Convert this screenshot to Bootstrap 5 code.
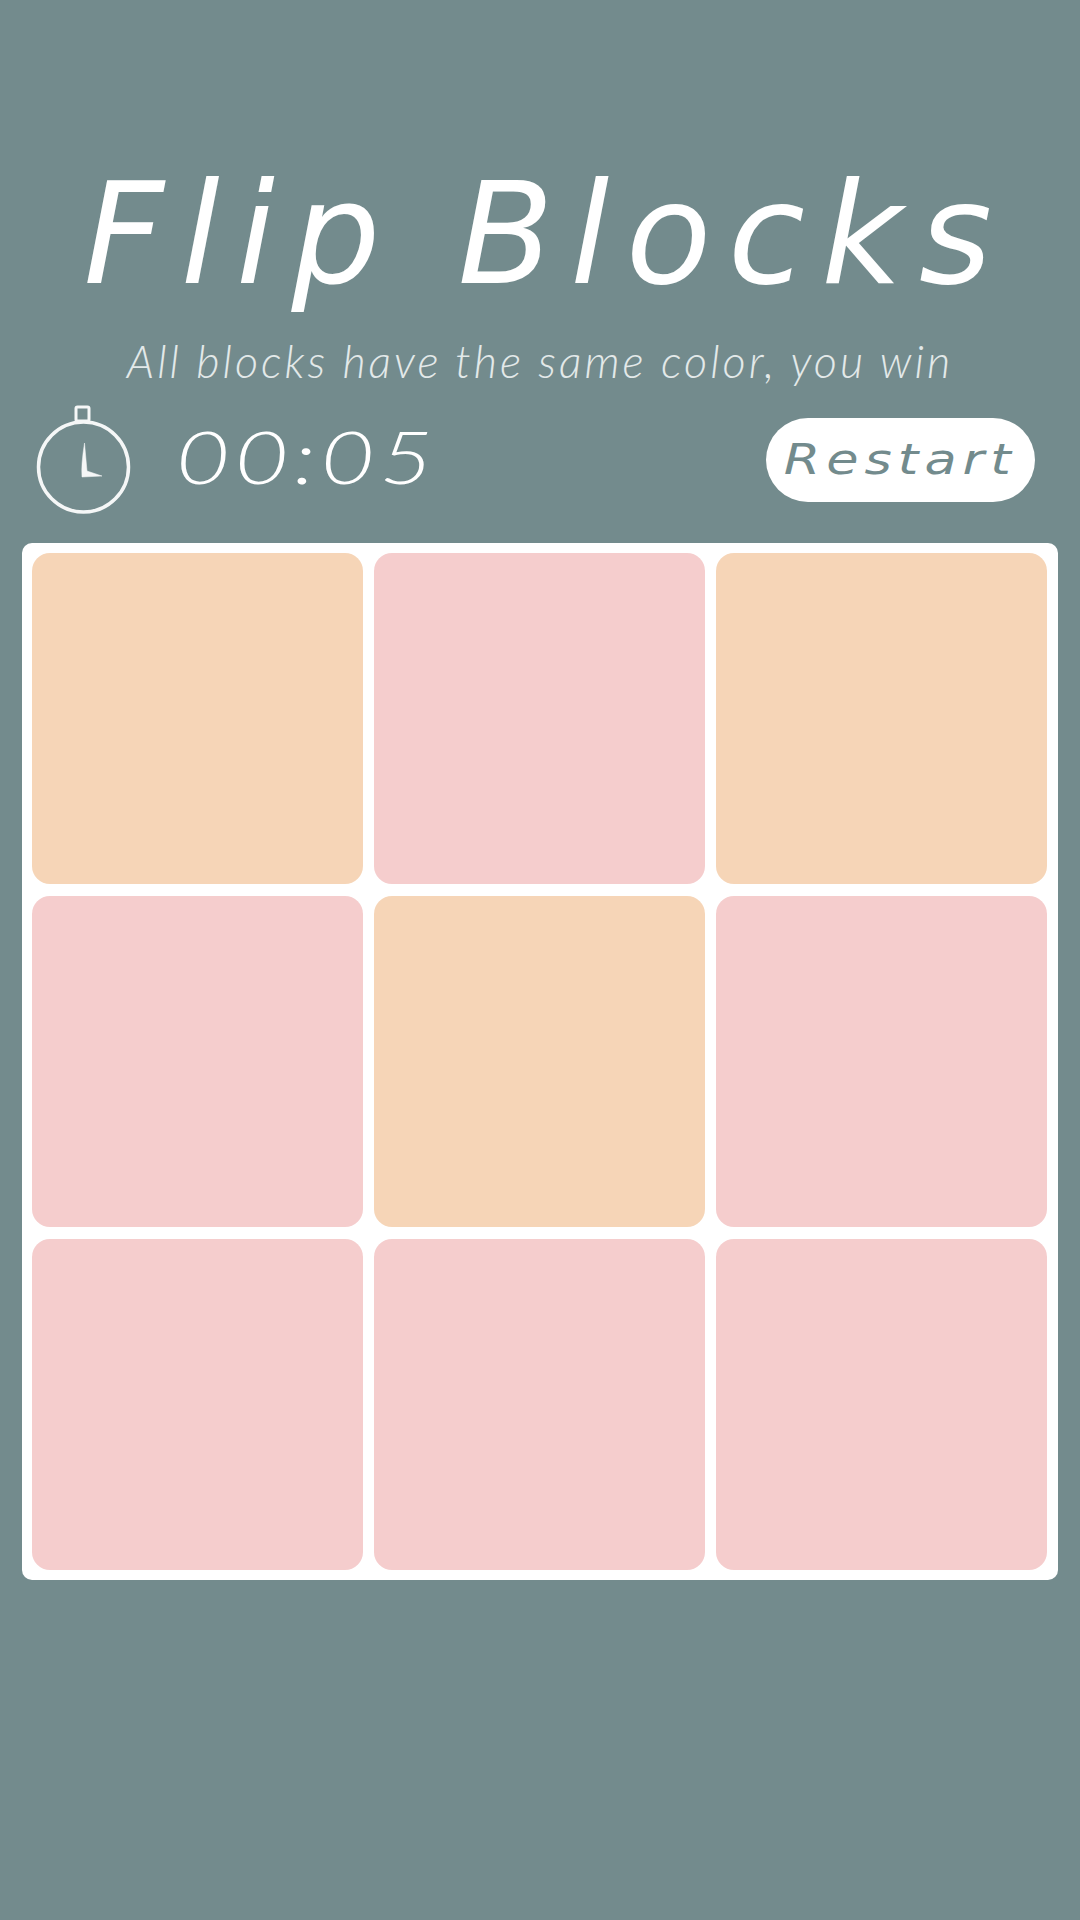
<!DOCTYPE html>
<html lang="en">
<head>
    <meta charset="UTF-8">
    <meta name="viewport" content="width=device-width, initial-scale=1.0">
    <title>Flip Blocks</title>
    <link href="https://cdn.jsdelivr.net/npm/bootstrap@5.3.0/dist/css/bootstrap.min.css" rel="stylesheet">
    <style>
        body { background: #738b8d; color: #fff; font-family: "DejaVu Sans", sans-serif; }
        .game-page { width: 1080px; height: 1920px; padding: 140px 22px 0; }
        .game-title { height: 190px; margin: 0; padding-left: 12px; font-family: "DejaVu Sans", sans-serif; font-style: italic; font-weight: 400; font-size: 140px; line-height: 190px; letter-spacing: 16.5px; white-space: nowrap; }
        .game-hint { height: 46px; margin: 8px 0 13px; font-family: "Lato", sans-serif; font-style: italic; font-weight: 300; font-size: 45px; line-height: 46px; letter-spacing: 3px; color: #e3e9e9; white-space: nowrap; }
        .stats-row { height: 126px; margin-bottom: 20px; padding: 0 23px 0 14px; }
        .timer-text { display: inline-block; margin-left: 45px; padding-bottom: 7px; font-family: "Lato", sans-serif; font-style: italic; font-weight: 300; font-size: 73px; letter-spacing: 4px; line-height: 1; transform: scaleX(1.27); transform-origin: left center; }
        .restart-btn { width: 269px; height: 84px; padding: 0; border: 0; border-radius: 42px; background: #fff; color: #738b8d; font-family: "DejaVu Sans", sans-serif; font-style: italic; font-size: 42px; line-height: 84px; }
        .restart-label { display: inline-block; letter-spacing: 4.8px; transform: scaleX(1.25); }
        .board { display: grid; grid-template-columns: repeat(3, 331px); column-gap: 11px; row-gap: 12px; padding: 10px; width: 1036px; background: #fff; border-radius: 10px; }
        .block { height: 331px; border-radius: 18px; }
        .block-peach { background: #f6d5b7; }
        .block-pink { background: #f5cdcd; }
    </style>
</head>
<body>
    <div class="game-page">
        <h1 class="game-title text-center">Flip Blocks</h1>
        <p class="game-hint text-center">All blocks have the same color, you win</p>

        <div class="stats-row d-flex align-items-center justify-content-between">
            <div class="d-flex align-items-center">
                <svg width="95" height="110" viewBox="0 0 95 110" fill="none" stroke="#f5f7f7" aria-hidden="true">
                    <rect x="40" y="2" width="13" height="14" rx="1.5" stroke-width="3"/>
                    <circle cx="47.5" cy="62" r="45" stroke-width="3.5"/>
                    <path d="M48.5 38 L51 66 L66 71 L46 72 Q45 60 48.5 38 Z" fill="#f5f7f7" stroke-width="0.5" stroke-linejoin="round"/>
                </svg>
                <span class="timer-text">00:05</span>
            </div>
            <button type="button" class="restart-btn"><span class="restart-label">Restart</span></button>
        </div>

        <div class="board" id="board"></div>
    </div>

    <script src="https://cdn.jsdelivr.net/npm/bootstrap@5.3.0/dist/js/bootstrap.bundle.min.js"></script>
    <script>
        // 1 = peach, 0 = pink
        const cells = [1, 0, 1, 0, 1, 0, 0, 0, 0];
        const board = document.getElementById('board');
        cells.forEach(function(c) {
            const el = document.createElement('div');
            el.className = 'block ' + (c ? 'block-peach' : 'block-pink');
            board.appendChild(el);
        });
    </script>
</body>
</html>
